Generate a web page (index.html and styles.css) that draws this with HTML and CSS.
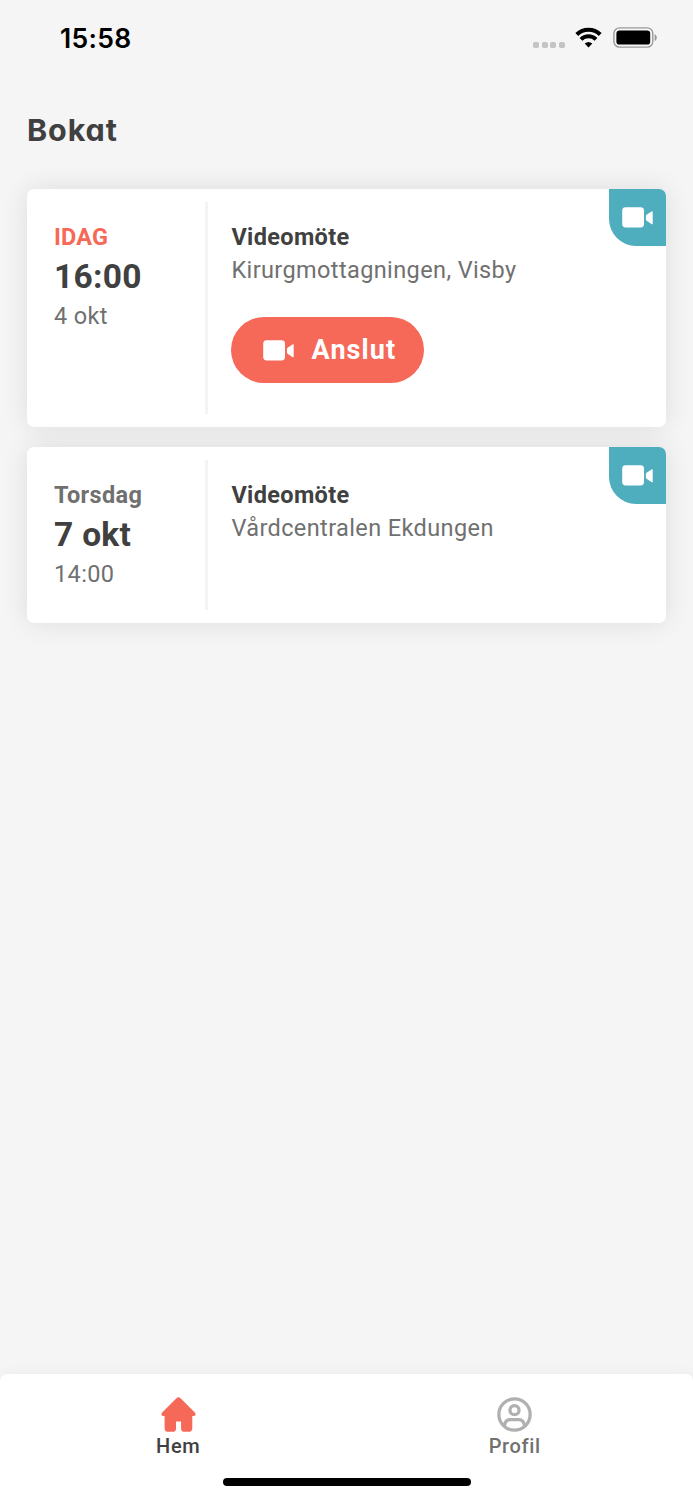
FILE: index.html
```html
<!DOCTYPE html>
<html lang="sv">
<head>
<meta charset="utf-8">
<title>Bokat</title>
<link rel="stylesheet" href="styles.css">
</head>
<body>
<svg class="defs" aria-hidden="true">
  <symbol id="camera" viewBox="0 0 31 21">
    <rect x="0.2" y="0.3" width="21.8" height="20.2" rx="3.4"/>
    <path d="M24.6 7.7 L29.4 4.4 Q30.7 3.7 30.7 5 V16.4 Q30.7 17.7 29.4 17 L24.6 13.8 Q23.9 13.4 23.9 12.6 V9 Q23.9 8.2 24.6 7.7 Z"/>
  </symbol>
</svg>
<div class="screen">
  <header class="status">
    <span class="clock">15:58</span>
    <span class="signal"><i></i><i></i><i></i><i></i></span>
    <svg class="wifi" viewBox="0 0 27 21">
      <path d="M1.8 7.4 A17 17 0 0 1 25.2 7.4" fill="none" stroke="#000" stroke-width="4.2"/>
      <path d="M6 12.4 A10.8 10.8 0 0 1 21 12.4" fill="none" stroke="#000" stroke-width="4"/>
      <path d="M9.7 16.6 Q13.5 13.2 17.3 16.6 L13.5 20.6 Z"/>
    </svg>
    <svg class="battery" viewBox="0 0 44 21">
      <rect x="0.9" y="0.9" width="38.9" height="19.2" rx="5.6" fill="none" stroke="#999" stroke-width="1.4"/>
      <rect x="3.4" y="3.4" width="33.8" height="14.2" rx="3.2"/>
      <path d="M41.6 7 Q43.8 8 43.8 10.5 T41.6 14 Z" fill="#999"/>
    </svg>
  </header>
  <h1 class="title">Bokat</h1>
  <main class="cards">
    <article class="card card-today">
      <div class="when">
        <span class="day day-today">IDAG</span>
        <strong class="main">16:00</strong>
        <span class="sub">4 okt</span>
      </div>
      <div class="what">
        <h2 class="kind">Videomöte</h2>
        <p class="place">Kirurgmottagningen, Visby</p>
        <button class="join"><svg class="camera"><use href="#camera"/></svg><span>Anslut</span></button>
      </div>
      <div class="badge"><svg class="camera"><use href="#camera"/></svg></div>
    </article>
    <article class="card card-later">
      <div class="when">
        <span class="day">Torsdag</span>
        <strong class="main">7 okt</strong>
        <span class="sub">14:00</span>
      </div>
      <div class="what">
        <h2 class="kind">Videomöte</h2>
        <p class="place">Vårdcentralen Ekdungen</p>
      </div>
      <div class="badge"><svg class="camera"><use href="#camera"/></svg></div>
    </article>
  </main>
  <footer class="bottom">
    <nav class="tabs">
      <a class="tab tab-home">
        <svg class="tab-icon" viewBox="0 0 34 34" fill="#f66857"><path d="M15 1.1 Q17 -0.5 19 1.1 L33.1 15.4 Q34.5 18 32 18.4 H30.4 V30 Q30.4 33.8 26.6 33.8 H23 Q19.5 33.8 19.5 30.5 V23.7 H14.6 V30.5 Q14.6 33.8 11.2 33.8 H7.2 Q3.5 33.8 3.5 30 V18.4 H2 Q-0.6 18 0.9 15.4 Z"/></svg>
        <span>Hem</span>
      </a>
      <a class="tab tab-profile">
        <svg class="tab-icon" viewBox="0 0 34 34" fill="none" stroke="#b0b0b0" stroke-width="3.2"><circle cx="17" cy="17" r="15.2"/><circle cx="17" cy="12.8" r="4.4"/><path d="M7.2 28.3 Q7.8 22 13 22 H21 Q26.2 22 26.8 28.3"/></svg>
        <span>Profil</span>
      </a>
    </nav>
    <div class="home-bar"></div>
  </footer>
</div>
</body>
</html>
```
FILE: styles.css
```css
* { box-sizing: border-box; }
body { margin: 0; background: #f5f5f5; font-family: Roboto, sans-serif; color: #404040; }
.defs { display: none; }
.screen { display: flex; flex-direction: column; height: 1500px; overflow: hidden; }
.status { display: flex; height: 76px; align-items: center; padding: 0 36px 0 60px; flex: none; }
.clock { font: 600 26.5px/32px Inter, sans-serif; color: #000; letter-spacing: 0.3px; margin-right: auto; }
.signal { display: flex; gap: 2.4px; margin: 13px 10.5px 0 0; }
.signal i { width: 6px; height: 6px; border-radius: 1.7px; background: #c4c4c4; }
.wifi { width: 27px; height: 21px; margin: -1px 11px 0 0; }
.battery { width: 44px; height: 21px; margin-top: -1px; }
.title { margin: 31px 0 0 27px; font: 650 30.5px/46px Inter, sans-serif; font-feature-settings: "cv11"; letter-spacing: 0.9px; height: 46px; flex: none; }
.cards { display: flex; flex-direction: column; gap: 20px; padding: 36.4px 27px 0; }
.card { position: relative; display: flex; padding: 13px 0; background: #fff; border-radius: 7px; box-shadow: 0 0 27px rgba(0, 0, 0, 0.1); }
.card-today { height: 237.6px; }
.card-later { height: 176px; }
.when { display: flex; flex-direction: column; width: 181px; padding: 16.2px 0 0 27px; border-right: 3px solid #f4f4f4; }
.card-later .when { padding-top: 16.7px; }
.day { font-size: 23.5px; line-height: 36px; font-weight: 700; color: #707070; letter-spacing: 0.35px; }
.day-today { color: #f66857; letter-spacing: 0.15px; }
.main { font-size: 33.5px; line-height: 43px; font-weight: 700; letter-spacing: 0.3px; }
.sub { font-size: 23.5px; line-height: 36px; color: #707070; letter-spacing: 0.36px; }
.what { padding: 18.6px 0 0 23.4px; }
.kind { margin: 0; font-size: 23.5px; line-height: 33.5px; font-weight: 700; letter-spacing: 0.35px; }
.place { margin: 0; font-size: 23.5px; line-height: 33.5px; color: #707070; letter-spacing: 0.39px; }
.join { display: flex; align-items: center; gap: 18px; width: 192.2px; height: 66.6px; margin-top: 28.9px; padding: 0 0 0 31.2px; border: 0; border-radius: 34px; background: #f66857; color: #fff; font: 700 27px/34px Roboto, sans-serif; letter-spacing: 1.1px; }
.camera { width: 31px; height: 21px; fill: #fff; flex: none; }
.badge { position: absolute; top: 0; right: 0; display: flex; align-items: center; justify-content: center; width: 57px; height: 57px; border-radius: 0 7px 0 27px; background: #4eaebd; }
.bottom { display: flex; flex-direction: column; align-items: center; height: 126px; margin-top: auto; background: #fff; border-radius: 7px 7px 0 0; box-shadow: 0 0 14px rgba(0, 0, 0, 0.05); flex: none; }
.tabs { display: flex; width: 100%; height: 104px; padding: 23px 10px 0; }
.tab { display: flex; flex-direction: column; align-items: center; gap: 2px; flex: 1; font-size: 20px; line-height: 24px; font-weight: 500; letter-spacing: 0.65px; }
.tab-profile { color: #707070; }
.tab-icon { width: 35px; height: 35px; }
.home-bar { width: 248px; height: 8px; border-radius: 4px; background: #000; }
```
